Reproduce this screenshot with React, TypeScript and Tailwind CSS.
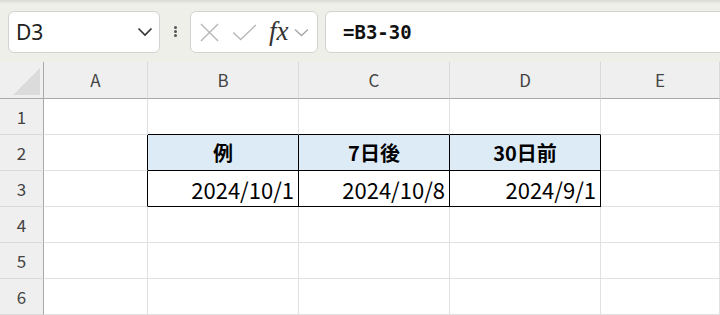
import { ReactNode } from 'react';

// cell helper: right/bottom borders, black where the table outline is
interface CellProps {
  children?: ReactNode;
  rb?: boolean;
  bb?: boolean;
  fill?: boolean;
  align?: 'center' | 'right';
  bold?: boolean;
}

function Cell({ children, rb, bb, fill, align = 'center', bold }: CellProps) {
  return (
    <div
      className={`flex items-center border-r border-b ${rb ? 'border-r-black' : 'border-r-[#e1e1e1]'} ${bb ? 'border-b-black' : 'border-b-[#e1e1e1]'} ${fill ? 'bg-[#ddebf7]' : 'bg-white'} ${align === 'right' ? 'justify-end pr-[4px] text-[22px] pt-[2px]' : 'justify-center text-[20px]'} ${bold ? 'font-bold' : 'font-normal'} text-black`}
    >
      {children}
    </div>
  );
}

function RowHead({ n }: { n: number }) {
  return (
    <div className="flex items-center justify-center bg-[#efefef] border-r border-r-[#a9a9a9] border-b border-b-[#dadada] text-[17px] text-[#444]">
      {n}
    </div>
  );
}

function ColHead({ label }: { label: string }) {
  return (
    <div className="flex items-center justify-center bg-[#efefef] border-r border-r-[#d9d9d9] border-b border-b-[#a9a9a9] text-[17px] text-[#444]">
      {label}
    </div>
  );
}

export default function App() {
  return (
    <div className="w-[720px] h-[315px] overflow-hidden bg-white font-['Noto_Sans_CJK_JP','Noto_Sans',sans-serif]">
      {/* formula bar */}
      <div className="relative h-[62px] bg-[#eeefe9] overflow-hidden">
        <div className="absolute top-0 left-0 w-full h-[4px] bg-gradient-to-b from-[#d9dad5] to-[#eeefe9]" />
        <div className="flex items-start pt-[11px]">
          {/* name box */}
          <div className="shrink-0 ml-[8px] w-[152px] h-[42px] flex items-center justify-between bg-white border border-[#d2d3ce] rounded-[6px] pl-[7px] pr-[6px]">
            <span className="font-['Noto_Sans',sans-serif] text-[21px] text-[#222] leading-none">D3</span>
            <svg width="16" height="10" viewBox="0 0 16 10" fill="none">
              <path d="M1.5 1.5 L8 8 L14.5 1.5" stroke="#333" strokeWidth="1.6" />
            </svg>
          </div>

          {/* dots */}
          <div className="shrink-0 ml-[13px] mt-[15px] flex flex-col gap-[1px] w-[4px] items-center">
            <span className="w-[3px] h-[3px] rounded-full bg-[#555]" />
            <span className="w-[3px] h-[3px] rounded-full bg-[#555]" />
            <span className="w-[3px] h-[3px] rounded-full bg-[#555]" />
          </div>

          {/* cancel / enter / fx */}
          <div className="shrink-0 ml-[13px] w-[128px] h-[42px] flex items-center bg-white border border-[#d2d3ce] rounded-[6px] pl-[9px]">
            <svg width="19" height="19" viewBox="0 0 20 20" fill="none">
              <path d="M1 1 L19 19 M19 1 L1 19" stroke="#b8b8b8" strokeWidth="1.5" />
            </svg>
            <svg className="ml-[13px]" width="25" height="17" viewBox="0 0 26 18" fill="none">
              <path d="M1 9 L9 16.5 L25 1" stroke="#b8b8b8" strokeWidth="1.5" />
            </svg>
            <span className="ml-[12px] font-['Liberation_Serif',serif] italic text-[27px] leading-none text-[#333] -mt-[2px]">fx</span>
            <svg className="ml-[5px]" width="15" height="9" viewBox="0 0 15 9" fill="none">
              <path d="M1 1.5 L7.5 7.5 L14 1.5" stroke="#a8a8a8" strokeWidth="1.4" />
            </svg>
          </div>

          {/* formula input */}
          <div className="shrink-0 ml-[7px] w-[420px] h-[42px] flex items-center bg-white border border-[#d2d3ce] rounded-[6px] pl-[17px]">
            <span className="font-['DejaVu_Sans_Mono',monospace] text-[19px] font-semibold text-[#111]">=B3-30</span>
          </div>
        </div>
      </div>

      {/* sheet */}
      <div className="grid grid-cols-[44px_104px_151px_151px_151px_1fr] grid-rows-[37px_repeat(6,36px)]">
        <div className="relative bg-[#efefef] border-r border-r-[#a9a9a9] border-b border-b-[#a9a9a9]">
          <svg className="absolute left-[13px] top-[6px]" width="27" height="27" viewBox="0 0 27 27">
            <path d="M27 0 L27 27 L0 27 Z" fill="#dbdbdb" />
          </svg>
        </div>
        <ColHead label="A" />
        <ColHead label="B" />
        <ColHead label="C" />
        <ColHead label="D" />
        <ColHead label="E" />

        {/* row 1 */}
        <RowHead n={1} />
        <Cell />
        <Cell bb />
        <Cell bb />
        <Cell bb />
        <Cell />

        {/* row 2 */}
        <RowHead n={2} />
        <Cell rb />
        <Cell rb bb fill bold>例</Cell>
        <Cell rb bb fill bold>7日後</Cell>
        <Cell rb bb fill bold>30日前</Cell>
        <Cell />

        {/* row 3 */}
        <RowHead n={3} />
        <Cell rb />
        <Cell rb bb align="right">2024/10/1</Cell>
        <Cell rb bb align="right">2024/10/8</Cell>
        <Cell rb bb align="right">2024/9/1</Cell>
        <Cell />

        {[4, 5, 6].map(n => (
          <div key={n} className="contents">
            <RowHead n={n} />
            <Cell />
            <Cell />
            <Cell />
            <Cell />
            <Cell />
          </div>
        ))}
      </div>
    </div>
  );
}
